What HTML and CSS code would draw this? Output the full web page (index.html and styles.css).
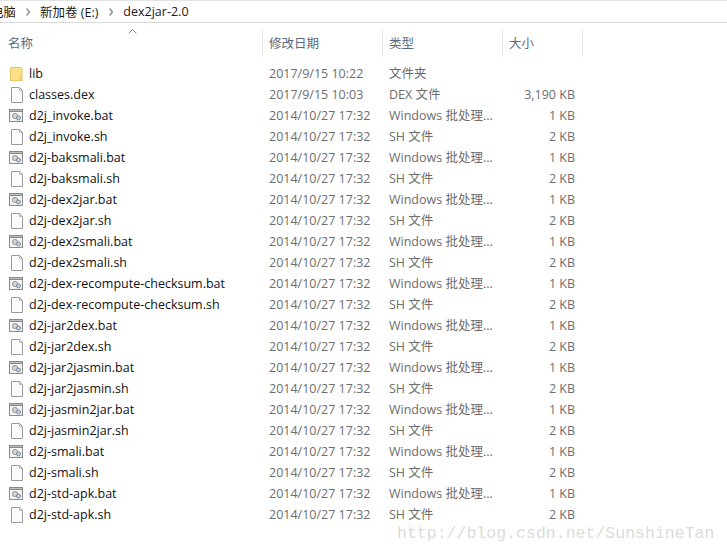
FILE: index.html
```html
<!DOCTYPE html>
<html lang="zh">
<head>
<meta charset="utf-8">
<title>dex2jar-2.0</title>
<link rel="stylesheet" href="styles.css">
</head>
<body>
<svg class="defs" width="0" height="0">
<symbol id="folder" viewBox="0 0 16 16"><path d="M1.500 1.500h10l1.500 1v12h-11.500z" fill="#fde08a" stroke="#e8c562"/><path d="M11 15v-4h2" fill="none" stroke="#e8c562"/></symbol>
<symbol id="doc" viewBox="0 0 16 16"><path d="M2.500.5h8l3 3v12h-11z" fill="#fbfbfb" stroke="#9a9a9a"/><path d="M10.500.5v3h3" fill="none" stroke="#b5b5b5"/></symbol>
<symbol id="bat" viewBox="0 0 16 16"><rect x=".5" y="1.500" width="13" height="12" fill="#f4f4f4" stroke="#8a8a8a"/><rect x=".5" y="1.500" width="13" height="2" fill="#bdbdbd" stroke="#8a8a8a"/><circle cx="6" cy="8" r="2.500" fill="#d8d8d8" stroke="#8f8f8f"/><circle cx="9.500" cy="10" r="2" fill="#c5d3e0" stroke="#7c8c9c"/></symbol>
<symbol id="chev" viewBox="0 0 4 8"><path d="M.5.5L3.500 4 .5 7.500" fill="none" stroke="#8a8a8a" stroke-width="1.300"/></symbol>
</svg>
<div class="crumbs">
  <span class="crumb first">电脑</span><svg class="chev"><use href="#chev"/></svg>
  <span class="crumb">新加卷 (E:)</span><svg class="chev"><use href="#chev"/></svg>
  <span class="crumb">dex2jar-2.0</span>
</div>
<div class="head">
  <div class="hcell name">名称<svg class="sort" width="9" height="5" viewBox="0 0 9 5"><path d="M.5 4.500l4-4 4 4" fill="none" stroke="#8a8a8a"/></svg></div>
  <div class="hcell date">修改日期</div>
  <div class="hcell type">类型</div>
  <div class="hcell size">大小</div>
</div>
<div class="list">
  <div class="row"><span class="fname"><svg class="ico"><use href="#folder"/></svg>lib</span><span class="cell">2017/9/15 10:22</span><span class="cell">文件夹</span><span class="cell num"></span></div>
  <div class="row"><span class="fname"><svg class="ico"><use href="#doc"/></svg>classes.dex</span><span class="cell">2017/9/15 10:03</span><span class="cell">DEX 文件</span><span class="cell num">3,190 KB</span></div>
  <div class="row"><span class="fname"><svg class="ico"><use href="#bat"/></svg>d2j_invoke.bat</span><span class="cell">2014/10/27 17:32</span><span class="cell">Windows 批处理...</span><span class="cell num">1 KB</span></div>
  <div class="row"><span class="fname"><svg class="ico"><use href="#doc"/></svg>d2j_invoke.sh</span><span class="cell">2014/10/27 17:32</span><span class="cell">SH 文件</span><span class="cell num">2 KB</span></div>
  <div class="row"><span class="fname"><svg class="ico"><use href="#bat"/></svg>d2j-baksmali.bat</span><span class="cell">2014/10/27 17:32</span><span class="cell">Windows 批处理...</span><span class="cell num">1 KB</span></div>
  <div class="row"><span class="fname"><svg class="ico"><use href="#doc"/></svg>d2j-baksmali.sh</span><span class="cell">2014/10/27 17:32</span><span class="cell">SH 文件</span><span class="cell num">2 KB</span></div>
  <div class="row"><span class="fname"><svg class="ico"><use href="#bat"/></svg>d2j-dex2jar.bat</span><span class="cell">2014/10/27 17:32</span><span class="cell">Windows 批处理...</span><span class="cell num">1 KB</span></div>
  <div class="row"><span class="fname"><svg class="ico"><use href="#doc"/></svg>d2j-dex2jar.sh</span><span class="cell">2014/10/27 17:32</span><span class="cell">SH 文件</span><span class="cell num">2 KB</span></div>
  <div class="row"><span class="fname"><svg class="ico"><use href="#bat"/></svg>d2j-dex2smali.bat</span><span class="cell">2014/10/27 17:32</span><span class="cell">Windows 批处理...</span><span class="cell num">1 KB</span></div>
  <div class="row"><span class="fname"><svg class="ico"><use href="#doc"/></svg>d2j-dex2smali.sh</span><span class="cell">2014/10/27 17:32</span><span class="cell">SH 文件</span><span class="cell num">2 KB</span></div>
  <div class="row"><span class="fname"><svg class="ico"><use href="#bat"/></svg>d2j-dex-recompute-checksum.bat</span><span class="cell">2014/10/27 17:32</span><span class="cell">Windows 批处理...</span><span class="cell num">1 KB</span></div>
  <div class="row"><span class="fname"><svg class="ico"><use href="#doc"/></svg>d2j-dex-recompute-checksum.sh</span><span class="cell">2014/10/27 17:32</span><span class="cell">SH 文件</span><span class="cell num">2 KB</span></div>
  <div class="row"><span class="fname"><svg class="ico"><use href="#bat"/></svg>d2j-jar2dex.bat</span><span class="cell">2014/10/27 17:32</span><span class="cell">Windows 批处理...</span><span class="cell num">1 KB</span></div>
  <div class="row"><span class="fname"><svg class="ico"><use href="#doc"/></svg>d2j-jar2dex.sh</span><span class="cell">2014/10/27 17:32</span><span class="cell">SH 文件</span><span class="cell num">2 KB</span></div>
  <div class="row"><span class="fname"><svg class="ico"><use href="#bat"/></svg>d2j-jar2jasmin.bat</span><span class="cell">2014/10/27 17:32</span><span class="cell">Windows 批处理...</span><span class="cell num">1 KB</span></div>
  <div class="row"><span class="fname"><svg class="ico"><use href="#doc"/></svg>d2j-jar2jasmin.sh</span><span class="cell">2014/10/27 17:32</span><span class="cell">SH 文件</span><span class="cell num">2 KB</span></div>
  <div class="row"><span class="fname"><svg class="ico"><use href="#bat"/></svg>d2j-jasmin2jar.bat</span><span class="cell">2014/10/27 17:32</span><span class="cell">Windows 批处理...</span><span class="cell num">1 KB</span></div>
  <div class="row"><span class="fname"><svg class="ico"><use href="#doc"/></svg>d2j-jasmin2jar.sh</span><span class="cell">2014/10/27 17:32</span><span class="cell">SH 文件</span><span class="cell num">2 KB</span></div>
  <div class="row"><span class="fname"><svg class="ico"><use href="#bat"/></svg>d2j-smali.bat</span><span class="cell">2014/10/27 17:32</span><span class="cell">Windows 批处理...</span><span class="cell num">1 KB</span></div>
  <div class="row"><span class="fname"><svg class="ico"><use href="#doc"/></svg>d2j-smali.sh</span><span class="cell">2014/10/27 17:32</span><span class="cell">SH 文件</span><span class="cell num">2 KB</span></div>
  <div class="row"><span class="fname"><svg class="ico"><use href="#bat"/></svg>d2j-std-apk.bat</span><span class="cell">2014/10/27 17:32</span><span class="cell">Windows 批处理...</span><span class="cell num">1 KB</span></div>
  <div class="row"><span class="fname"><svg class="ico"><use href="#doc"/></svg>d2j-std-apk.sh</span><span class="cell">2014/10/27 17:32</span><span class="cell">SH 文件</span><span class="cell num">2 KB</span></div>
</div>
<div class="mark">http://blog.csdn.net/SunshineTan</div>
</body>
</html>
```
FILE: styles.css
```css
html, body {
  margin: 0;
  padding: 0;
  height: 100%;
  overflow: hidden;
  background: #fff;
  font-family: "Open Sans", "Noto Sans CJK SC", sans-serif;
  font-size: 12.500px;
  color: #1a1a1a;
}
body { position: relative; }
.defs { display: block; height: 0; }
.crumbs {
  height: 21px;
  border-top: 1px solid #e3e3e3;
  border-bottom: 1px solid #d9d9d9;
  display: flex;
  align-items: center;
  white-space: nowrap;
  overflow: hidden;
}
.crumb.first { margin-left: -9px; width: 24px; flex: none; overflow: hidden; }
.chev { width: 4px; height: 8px; margin: 0 10px 0 11px; flex: none; }
.head {
  display: grid;
  grid-template-columns: 263px 120px 120px 80px;
  height: 27px;
  margin-top: 7px;
  color: #5a6a7e;
}
.hcell {
  position: relative;
  display: flex;
  align-items: center;
  padding-left: 6px;
  padding-bottom: 2px;
  box-sizing: border-box;
  border-right: 1px solid #e5e5e5;
}
.name { padding-left: 8px; }
.sort { position: absolute; left: 128px; top: -1px; }
.list { margin-top: 6px; }
.row {
  display: grid;
  grid-template-columns: 263px 120px 120px 72px;
  height: 21px;
  line-height: 21px;
  color: #6d6d6d;
}
.fname {
  display: flex;
  align-items: center;
  color: #111;
  padding-left: 9px;
  white-space: nowrap;
}
.ico { width: 16px; height: 16px; margin-right: 4px; flex: none; }
.cell { padding-left: 6px; white-space: nowrap; }
.num { text-align: right; padding: 0; }
.mark {
  position: absolute;
  left: 397px;
  top: 525px;
  font-family: "Liberation Mono", monospace;
  font-size: 16.550px;
  line-height: 18px;
  color: #dcdcd8;
  white-space: nowrap;
}
```
